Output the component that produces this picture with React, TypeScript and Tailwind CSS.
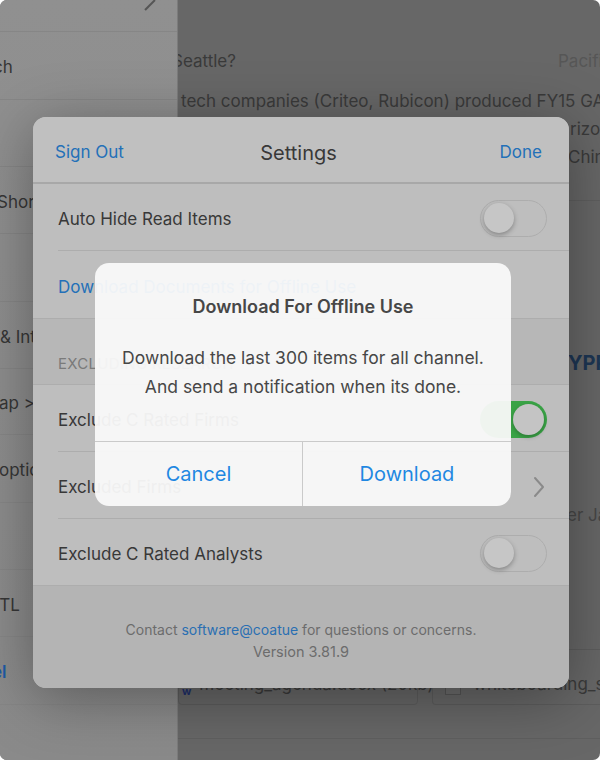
import React from "react";

const font = { fontFamily: "Inter, 'Liberation Sans', sans-serif" };

function Toggle({ on }: { on?: boolean }) {
  if (on) {
    return (
      <div className="relative w-[67px] h-[37px] mt-[3px] rounded-full bg-[#3aa346] shrink-0">
        <div className="absolute right-[3px] top-[3px] w-[31px] h-[31px] rounded-full bg-[#c4c4c4] shadow-[0_2px_4px_rgba(0,0,0,0.25)]" />
      </div>
    );
  }
  return (
    <div className="relative w-[67px] h-[37px] mt-[3px] rounded-full border-[1.5px] border-[#adadad] shrink-0">
      <div className="absolute left-[3px] top-[2px] w-[30px] h-[30px] rounded-full bg-[#c6c6c6] shadow-[0_2px_5px_rgba(0,0,0,0.3)]" />
    </div>
  );
}

function Row({
  label,
  blue,
  right,
  border = true,
}: {
  label: string;
  blue?: boolean;
  right?: React.ReactNode;
  border?: boolean;
}) {
  return (
    <div className="h-[67px] shrink-0 pl-[25px] flex">
      <div
        className={`flex-1 flex items-center justify-between pr-[22px] ${
          border ? "border-b border-[#adadad]" : ""
        }`}
      >
        <span className={`mt-[6px] text-[17px] ${blue ? "text-[#2370b8]" : "text-[#383838]"}`}>{label}</span>
        {right}
      </div>
    </div>
  );
}

export default function App() {
  return (
    <div className="w-[600px] h-[760px] bg-white" style={font}>
      <div className="relative w-full h-full rounded-[7px] overflow-hidden flex bg-[#676767]">
        {/* Left sidebar */}
        <aside className="w-[178px] shrink-0 h-full bg-gradient-to-b from-[#909090] to-[#8a8a8a] border-r border-[#7c7c7c] flex flex-col text-[17px] text-[#363636] overflow-hidden whitespace-nowrap">
          <div className="h-[32px] shrink-0 border-b border-[#868686] relative">
            <div className="absolute left-[149px] top-[-2px] w-[2px] h-[14px] bg-[#555] rotate-45" />
          </div>
          <div className="h-[68px] shrink-0 border-b border-[#868686] flex items-center pt-[5px] -ml-[7px]">ch</div>
          <div className="h-[67px] shrink-0 border-b border-[#868686]" />
          <div className="h-[67px] shrink-0 border-b border-[#868686] flex items-center pt-[5px] -ml-[3px]">Shor</div>
          <div className="h-[68px] shrink-0 border-b border-[#868686]" />
          <div className="h-[67px] shrink-0 border-b border-[#868686] flex items-center pt-[5px]">&amp; Inte</div>
          <div className="h-[66px] shrink-0 border-b border-[#868686] flex items-center pt-[5px] -ml-[1px]">ap &gt;</div>
          <div className="h-[68px] shrink-0 border-b border-[#868686] flex items-center pt-[5px] -ml-[1px]">optio</div>
          <div className="h-[67px] shrink-0 border-b border-[#868686]" />
          <div className="h-[67px] shrink-0 border-b border-[#868686] flex items-center pt-[5px] -ml-[11px]">ETL</div>
          <div className="h-[68px] shrink-0 border-b border-[#868686] flex items-center pt-[5px] -ml-[39px] text-[#1d5aa6] font-semibold">Panel</div>
        </aside>

        {/* Right main content */}
        <main className="flex-1 h-full flex flex-col pt-[49px] text-[17px] text-[#3a3a3a] overflow-hidden whitespace-nowrap">
          <div className="h-[24px] leading-[24px] flex -ml-[6px]">
            <span className="w-[386px] shrink-0">Seattle?</span>
            <span className="text-[#565656]">Pacific Northwest</span>
          </div>
          <div className="mt-[14px] leading-[28px] pl-[3px]">
            tech companies (Criteo, Rubicon) produced FY15 GAAP revenue
          </div>
          <div className="leading-[28px] pl-[392px]">rizon</div>
          <div className="leading-[28px] pl-[390px]">China</div>
          <div className="mt-[29px] border-t border-[#5f5f5f]" />
          <div className="mt-[150px] h-[24px] leading-[24px] pl-[390px] text-[20px] font-bold text-[#1d3654]">YPP.</div>
          <div className="mt-[128px] h-[24px] leading-[24px] pl-[389px] text-[#474747]">er Ja</div>
          <div className="mt-[122px] flex gap-[14px]">
            <div className="w-[240px] h-[56px] shrink-0 border border-[#5d5d5d] rounded-[4px] flex items-end pb-[10px] pl-[3px] gap-[8px]">
              <span className="text-[11px] font-bold text-[#1f2f6a] leading-none mb-[-3px]">w</span>
              <span className="text-[#3a3a3a] leading-[20px]">meeting_agenda.docx (20kb)</span>
            </div>
            <div className="flex-1 h-[56px] border border-[#5d5d5d] border-r-0 rounded-l-[4px] flex items-end pb-[8px] pl-[12px] gap-[12px]">
              <span className="w-[16px] h-[17px] border border-[#555] bg-[#6c6c6c] mb-[1px]" />
              <span className="text-[#3a3a3a] leading-[20px] mb-[2px]">whiteboarding_session.pdf</span>
            </div>
          </div>
          <div className="mt-[33px] border-t border-[#5f5f5f]" />
        </main>

        {/* Settings modal */}
        <div className="absolute left-[33px] top-[117px] w-[536px] h-[571px] rounded-[13px] bg-[#bebebe] overflow-hidden shadow-[0_10px_60px_rgba(0,0,0,0.35)] flex flex-col">
          <div className="h-[67px] shrink-0 border-b-2 border-[#a8a8a8] grid grid-cols-3 items-center pt-[6px] pl-[22px] pr-[27px] bg-[#c0c0c0]">
            <span className="text-[17px] text-[#2370b8]">Sign Out</span>
            <span className="text-[20px] text-[#383838] text-center">Settings</span>
            <span className="text-[17px] text-[#2370b8] text-right">Done</span>
          </div>
          <Row label="Auto Hide Read Items" right={<Toggle />} />
          <Row label="Download Documents for Offline Use" blue border={false} />
          <div className="h-[67px] shrink-0 border-y border-[#adadad] bg-[#b7b7b7] flex items-end pb-[9px] pl-[25px] text-[15px] text-[#7a7a7a] tracking-[0.3px]">
            EXCLUDING RESEARCH
          </div>
          <Row label="Exclude C Rated Firms" right={<Toggle on />} />
          <Row
            label="Excluded Firms"
            right={
              <svg width="12" height="22" viewBox="0 0 12 22" className="mr-[2px] mt-[3px]">
                <path d="M2 2 L10 11 L2 20" fill="none" stroke="#8a8a8a" strokeWidth="2" strokeLinecap="round" strokeLinejoin="round" />
              </svg>
            }
          />
          <div className="h-[67px] shrink-0 pl-[25px] flex items-center justify-between pr-[22px] border-b border-[#adadad]">
            <span className="mt-[6px] text-[17px] text-[#383838]">Exclude C Rated Analysts</span>
            <Toggle />
          </div>
          <div className="flex-1 bg-[#b4b4b4] flex flex-col items-center pt-[33px] leading-[22px] text-[#6c6c6c]">
            <div className="text-[14px]">
              Contact <span className="text-[#2a6fb2]">software@coatue</span> for questions or concerns.
            </div>
            <div className="text-[14.5px]">Version 3.81.9</div>
          </div>
        </div>

        {/* Alert */}
        <div className="absolute left-[95px] top-[263px] w-[416px] h-[243px] rounded-[14px] bg-[rgba(249,249,249,0.95)] flex flex-col text-[#474747]">
          <div className="flex-1 flex flex-col items-center pt-[31px]">
            <div className="text-[18px] font-semibold leading-[26px]">Download For Offline Use</div>
            <div className="mt-[23px] text-[17.5px] leading-[29px] text-center">
              Download the last 300 items for all channel.
              <br />
              And send a notification when its done.
            </div>
          </div>
          <div className="h-[65px] shrink-0 border-t border-[#cacaca] grid grid-cols-2 text-[20px] text-[#1f88e2]">
            <div className="flex items-center justify-center border-r border-[#cacaca]">Cancel</div>
            <div className="flex items-center justify-center">Download</div>
          </div>
        </div>
      </div>
    </div>
  );
}
